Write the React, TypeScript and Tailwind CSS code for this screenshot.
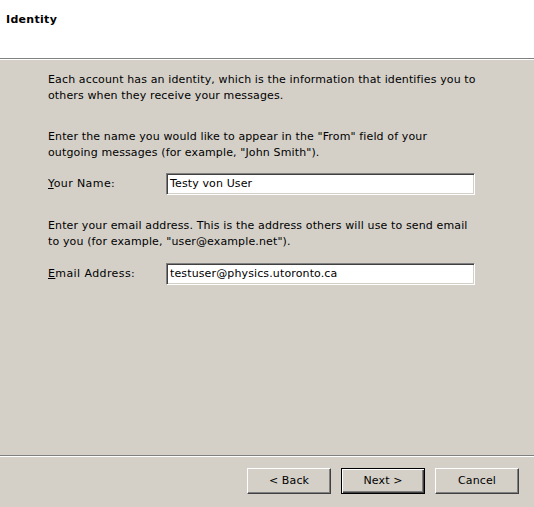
import React from "react";

const font = { fontFamily: '"DejaVu Sans", Verdana, sans-serif' };

function Btn({ label, def }: { label: string; def?: boolean }) {
  return (
    <div
      className={
        def
          ? "w-[84px] h-[26px] flex items-center justify-center border border-black shadow-[inset_1px_1px_0_#ffffff,inset_-1px_-1px_0_#404040,inset_-2px_-2px_0_#808080] text-[11px] leading-[16px] text-black"
          : "w-[84px] h-[26px] flex items-center justify-center border border-t-white border-l-white border-b-[#404040] border-r-[#404040] shadow-[inset_-1px_-1px_0_#808080] text-[11px] leading-[16px] text-black"
      }
    >
      {label}
    </div>
  );
}

function Field({ value }: { value: string }) {
  return (
    <div className="w-[309px] h-[22px] flex items-center bg-white border border-t-[#808080] border-l-[#808080] border-b-white border-r-white shadow-[inset_1px_1px_0_#404040,inset_-1px_-1px_0_#d4d0c8] pl-[3px] text-[11px] leading-[16px] text-black">
      {value}
    </div>
  );
}

export default function App() {
  return (
    <div
      className="w-[534px] h-[507px] flex flex-col bg-[#d4d0c8] text-black overflow-hidden tracking-[0.13px]"
      style={font}
    >
      <div className="h-[59px] bg-white border-b border-[#808080] pl-[6px] pt-[12px] text-[11px] leading-[16px] font-bold tracking-[0.3px]">
        Identity
      </div>
      <div className="h-px bg-white" />
      <div className="flex-1 flex flex-col pl-[48px] pt-[12px] text-[11px] leading-[16px]">
        <p className="whitespace-nowrap">
          Each account has an identity, which is the information that identifies you to
          <br />
          others when they receive your messages.
        </p>
        <p className="whitespace-nowrap mt-[25px]">
          Enter the name you would like to appear in the "From" field of your
          <br />
          outgoing messages (for example, "John Smith").
        </p>
        <div className="flex items-center mt-[12px]">
          <div className="w-[118px] tracking-[0.4px]">
            <u>Y</u>our Name:
          </div>
          <Field value="Testy von User" />
        </div>
        <p className="whitespace-nowrap mt-[23px]">
          Enter your email address. This is the address others will use to send email
          <br />
          to you (for example, "user@example.net").
        </p>
        <div className="flex items-center mt-[13px]">
          <div className="w-[118px] tracking-[0.4px]">
            <u>E</u>mail Address:
          </div>
          <Field value="testuser@physics.utoronto.ca" />
        </div>
      </div>
      <div className="h-px bg-[#808080]" />
      <div className="h-px bg-white" />
      <div className="h-[50px] flex justify-end items-start gap-[10px] pt-[11px] pr-[15px]">
        <Btn label="< Back" />
        <Btn label="Next >" def />
        <Btn label="Cancel" />
      </div>
    </div>
  );
}
